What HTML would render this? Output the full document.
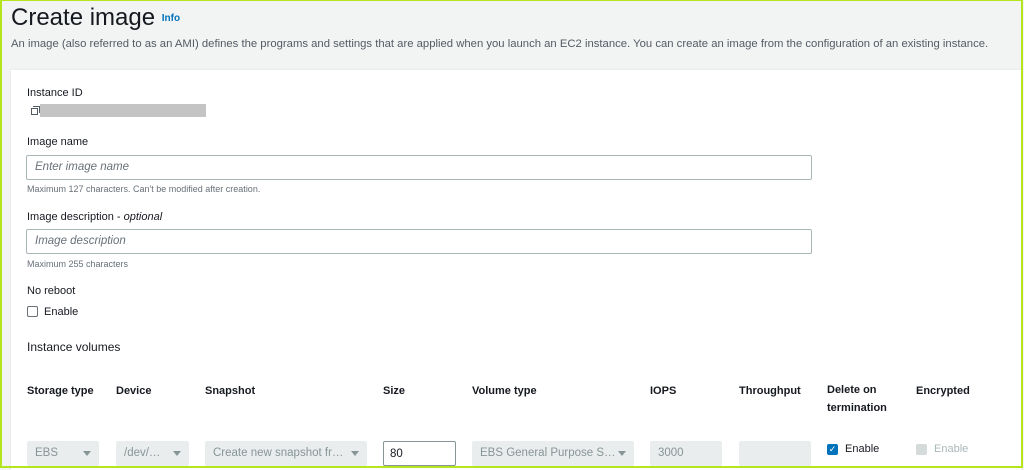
<!DOCTYPE html>
<html><head><style>
*{box-sizing:border-box;margin:0;padding:0}
body{width:1024px;height:469px;overflow:hidden;background:#f2f3f3;font-family:"Liberation Sans",sans-serif;color:#16191f;position:relative}
.frame{position:absolute;left:0;top:0;width:1023px;height:468px;border:2px solid #b5e61d;border-top-width:1px;pointer-events:none;z-index:5}
.a{position:absolute;white-space:nowrap}
.panel{position:absolute;left:11px;top:70px;width:1010px;height:400px;background:#fff;box-shadow:0 0 2px #ddd}
.lbl{font-size:11px;color:#16191f}
.inp{position:absolute;border:1px solid #aab7b8;border-radius:2px;height:25px;font-size:11.5px;font-style:italic;color:#687078;padding:5px 8px;background:#fff}
.hint{font-size:9px;color:#687078}
.th{font-size:11px;font-weight:bold;color:#16191f}
.sel{position:absolute;top:441px;height:25px;background:#eaeded;font-size:11.5px;color:#879596;padding:6px 8px;border-radius:2px}
.sel .c{position:absolute;right:8px;top:10px;width:0;height:0;border-left:4px solid transparent;border-right:4px solid transparent;border-top:5px solid #879596}
</style></head><body>
<div class="frame"></div>
<div class="a" style="left:11px;top:4px;font-size:24px;color:#16191f">Create image <span style="font-size:10px;font-weight:bold;color:#0073bb;vertical-align:middle">Info</span></div>
<div class="a" style="left:11px;top:38px;font-size:11.3px;color:#545b64">An image (also referred to as an AMI) defines the programs and settings that are applied when you launch an EC2 instance. You can create an image from the configuration of an existing instance.</div>
<div class="panel"></div>
<div class="a lbl" style="left:27px;top:87px">Instance ID</div>
<div class="a" style="left:31px;top:108px;width:7px;height:7px;border:1.3px solid #545b64"></div>
<div class="a" style="left:33px;top:106px;width:7px;height:7px;border-top:1.3px solid #545b64;border-right:1.3px solid #545b64"></div>
<div class="a" style="left:40px;top:104px;width:166px;height:13px;background:#c4c4c4"></div>
<div class="a lbl" style="left:27px;top:136px">Image name</div>
<div class="inp" style="left:26px;top:155px;width:786px">Enter image name</div>
<div class="a hint" style="left:27px;top:184px">Maximum 127 characters. Can't be modified after creation.</div>
<div class="a lbl" style="left:27px;top:211px">Image description - <i>optional</i></div>
<div class="inp" style="left:26px;top:229px;width:786px">Image description</div>
<div class="a hint" style="left:27px;top:259px">Maximum 255 characters</div>
<div class="a lbl" style="left:27px;top:285px">No reboot</div>
<div class="a" style="left:27px;top:306px;width:11px;height:11px;border:1px solid #687078;border-radius:2px"></div>
<div class="a lbl" style="left:44px;top:306px">Enable</div>
<div class="a" style="left:27px;top:340px;font-size:12px;color:#16191f">Instance volumes</div>
<div class="a th" style="left:27px;top:385px">Storage type</div>
<div class="a th" style="left:116px;top:385px">Device</div>
<div class="a th" style="left:205px;top:385px">Snapshot</div>
<div class="a th" style="left:383px;top:385px">Size</div>
<div class="a th" style="left:472px;top:385px">Volume type</div>
<div class="a th" style="left:650px;top:385px">IOPS</div>
<div class="a th" style="left:739px;top:385px">Throughput</div>
<div class="a th" style="left:827px;line-height:18px;top:381px">Delete on<br>termination</div>
<div class="a th" style="left:916px;top:385px">Encrypted</div>
<div class="sel" style="left:27px;width:72px">EBS<span class="c"></span></div>
<div class="sel" style="left:116px;width:73px">/dev/…<span class="c"></span></div>
<div class="sel" style="left:205px;width:162px">Create new snapshot fr…<span class="c"></span></div>
<div class="a" style="left:383px;top:441px;width:73px;height:25px;border:1px solid #879596;border-radius:2px;font-size:11.5px;padding:6px 6px;color:#16191f">80</div>
<div class="sel" style="left:472px;width:162px">EBS General Purpose S…<span class="c"></span></div>
<div class="sel" style="left:650px;width:72px">3000</div>
<div class="sel" style="left:739px;width:72px"></div>
<div class="a" style="left:827px;top:444px;width:11px;height:11px;background:#0073bb;border-radius:2px;color:#fff;font-size:9px;line-height:11px;text-align:center">✓</div>
<div class="a lbl" style="left:845px;top:443px">Enable</div>
<div class="a" style="left:916px;top:444px;width:11px;height:11px;background:#d5dbdb;border-radius:2px"></div>
<div class="a lbl" style="left:934px;top:443px;color:#aab7b8">Enable</div>
</body></html>
